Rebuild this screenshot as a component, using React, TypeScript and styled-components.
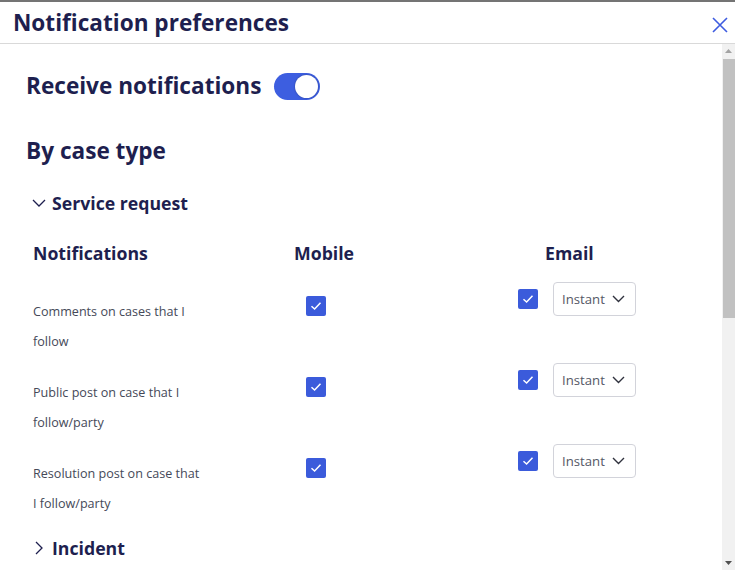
import React from "react";
import styled, { createGlobalStyle } from "styled-components";

const GlobalStyle = createGlobalStyle`
  html, body { margin: 0; padding: 0; background: #ffffff; }
  body { font-family: "Open Sans", "Noto Sans", sans-serif; }
  * { box-sizing: border-box; }
`;

const NAVY = "#1e1f4f";
const BLUE = "#3b5bdb";

const Frame = styled.div`
  width: 735px;
  height: 570px;
  display: flex;
  flex-direction: column;
  overflow: hidden;
  background: #fff;
`;

const TopStrip = styled.div`
  height: 3px;
  flex: none;
  background: #fff;
  border-top: 2px solid #747474;
`;

const Header = styled.header`
  flex: none;
  height: 41px;
  display: flex;
  align-items: center;
  justify-content: space-between;
  padding: 0 6px 0 13px;
  border-bottom: 1px solid #d9d9d9;
`;

const Title = styled.h1`
  margin: 0;
  font-size: 22.6px;
  line-height: 30px;
  font-weight: 700;
  color: ${NAVY};
`;

const CloseButton = styled.button`
  width: 18px;
  height: 18px;
  padding: 0;
  border: 0;
  background: transparent;
  display: flex;
  align-items: center;
  justify-content: center;
  margin-top: 4px;
  cursor: pointer;
`;

const Body = styled.div`
  flex: 1;
  min-height: 0;
  display: flex;
`;

const Content = styled.main`
  flex: 1;
  overflow: hidden;
  padding: 27px 0 0 26px;
  display: flex;
  flex-direction: column;
`;

const ToggleRow = styled.div`
  display: flex;
  align-items: center;
  gap: 13px;
`;

const BigHeading = styled.h2<{ $mt?: number }>`
  margin: ${(p) => p.$mt ?? 0}px 0 0 0;
  font-size: 22.6px;
  line-height: 30px;
  font-weight: 700;
  color: ${NAVY};
`;

const Switch = styled.button`
  width: 46px;
  height: 27px;
  border-radius: 14px;
  border: 0;
  padding: 0 2px;
  background: #3d5ee0;
  display: flex;
  align-items: center;
  justify-content: flex-end;
  cursor: pointer;
`;

const Knob = styled.span`
  width: 23px;
  height: 23px;
  border-radius: 50%;
  background: #fff;
  box-shadow: 0 0 2px rgba(0, 0, 0, 0.35);
`;

const AccordionHeader = styled.button<{ $mt: number }>`
  margin: ${(p) => p.$mt}px 0 0 6px;
  padding: 0;
  border: 0;
  background: transparent;
  display: flex;
  align-items: center;
  gap: 6px;
  font-family: inherit;
  font-size: 17.7px;
  line-height: 24px;
  font-weight: 700;
  color: ${NAVY};
  cursor: pointer;
  align-self: flex-start;
`;

const ChevronBox = styled.span`
  width: 14px;
  display: flex;
  justify-content: center;
  align-items: center;
`;

const Table = styled.div`
  margin: 26px 0 0 7px;
  display: grid;
  grid-template-columns: 261px 224px 1fr;
`;

const ColHead = styled.div<{ $indent?: number }>`
  font-size: 17.7px;
  line-height: 24px;
  font-weight: 700;
  color: ${NAVY};
  padding-left: ${(p) => p.$indent ?? 0}px;
  margin-bottom: 17px;
`;

const RowText = styled.div`
  width: 170px;
  font-size: 12.6px;
  line-height: 30px;
  color: #454958;
  padding-top: 15px;
  height: 81px;
`;

const MobileCell = styled.div`
  padding: 14px 0 0 12px;
`;

const EmailCell = styled.div`
  display: flex;
  align-items: center;
  gap: 15px;
  align-self: start;
`;

const CheckBox = styled.span`
  width: 20px;
  height: 20px;
  border-radius: 2px;
  background: ${BLUE};
  display: flex;
  align-items: center;
  justify-content: center;
  flex: none;
`;

const Select = styled.div`
  width: 83px;
  height: 34px;
  border: 1px solid #d2d3da;
  border-radius: 4px;
  display: flex;
  align-items: center;
  justify-content: space-between;
  padding: 0 10px 0 8px;
  font-size: 13.2px;
  color: #555866;
`;

const Scrollbar = styled.div`
  width: 13px;
  flex: none;
  background: #f1f1f1;
  display: flex;
  flex-direction: column;
`;

const ArrowButton = styled.div`
  height: 14px;
  flex: none;
  display: flex;
  align-items: center;
  justify-content: center;
`;

const Track = styled.div`
  flex: 1;
  display: flex;
  flex-direction: column;
  padding-left: 1px;
`;

const Thumb = styled.div`
  height: 259px;
  margin-top: 1px;
  background: #c1c1c1;
`;

const Check = () => (
  <svg width="12" height="10" viewBox="0 0 12 10">
    <path d="M1.5 5.2 L4.6 8 L10.5 1.8" fill="none" stroke="#fff" strokeWidth="1.5" />
  </svg>
);

const SelectChevron = () => (
  <svg width="13" height="8" viewBox="0 0 13 8">
    <path d="M1 1 L6.5 6.5 L12 1" fill="none" stroke="#30323e" strokeWidth="1.4" />
  </svg>
);

const ChevronDown = () => (
  <svg width="14" height="8" viewBox="0 0 14 8">
    <path d="M1 1 L7 7 L13 1" fill="none" stroke={NAVY} strokeWidth="1.3" />
  </svg>
);

const ChevronRight = () => (
  <svg width="8" height="14" viewBox="0 0 8 14">
    <path d="M1 1 L7 7 L1 13" fill="none" stroke={NAVY} strokeWidth="1.3" />
  </svg>
);

const rows = [
  "Comments on cases that I follow",
  "Public post on case that I follow/party",
  "Resolution post on case that I follow/party",
];

export default function App() {
  return (
    <>
      <GlobalStyle />
      <Frame>
        <TopStrip />
        <Header>
          <Title>Notification preferences</Title>
          <CloseButton aria-label="Close">
            <svg width="16" height="16" viewBox="0 0 16 16">
              <path d="M1 1 L15 15 M15 1 L1 15" stroke="#3e5ce0" strokeWidth="1.6" fill="none" />
            </svg>
          </CloseButton>
        </Header>
        <Body>
          <Content>
            <ToggleRow>
              <BigHeading>Receive notifications</BigHeading>
              <Switch aria-label="Receive notifications">
                <Knob />
              </Switch>
            </ToggleRow>
            <BigHeading $mt={35}>By case type</BigHeading>
            <AccordionHeader $mt={25}>
              <ChevronBox>
                <ChevronDown />
              </ChevronBox>
              Service request
            </AccordionHeader>
            <Table>
              <ColHead>Notifications</ColHead>
              <ColHead>Mobile</ColHead>
              <ColHead $indent={27}>Email</ColHead>
              {rows.map((r) => (
                <React.Fragment key={r}>
                  <RowText>{r}</RowText>
                  <MobileCell>
                    <CheckBox>
                      <Check />
                    </CheckBox>
                  </MobileCell>
                  <EmailCell>
                    <CheckBox>
                      <Check />
                    </CheckBox>
                    <Select>
                      Instant
                      <SelectChevron />
                    </Select>
                  </EmailCell>
                </React.Fragment>
              ))}
            </Table>
            <AccordionHeader $mt={11}>
              <ChevronBox>
                <ChevronRight />
              </ChevronBox>
              Incident
            </AccordionHeader>
          </Content>
          <Scrollbar>
            <ArrowButton>
              <svg width="7" height="4" viewBox="0 0 7 4">
                <path d="M0 4 L3.5 0 L7 4 Z" fill="#a3a3a3" />
              </svg>
            </ArrowButton>
            <Track>
              <Thumb />
            </Track>
            <ArrowButton>
              <svg width="7" height="4" viewBox="0 0 7 4">
                <path d="M0 0 L3.5 4 L7 0 Z" fill="#505050" />
              </svg>
            </ArrowButton>
          </Scrollbar>
        </Body>
      </Frame>
    </>
  );
}
